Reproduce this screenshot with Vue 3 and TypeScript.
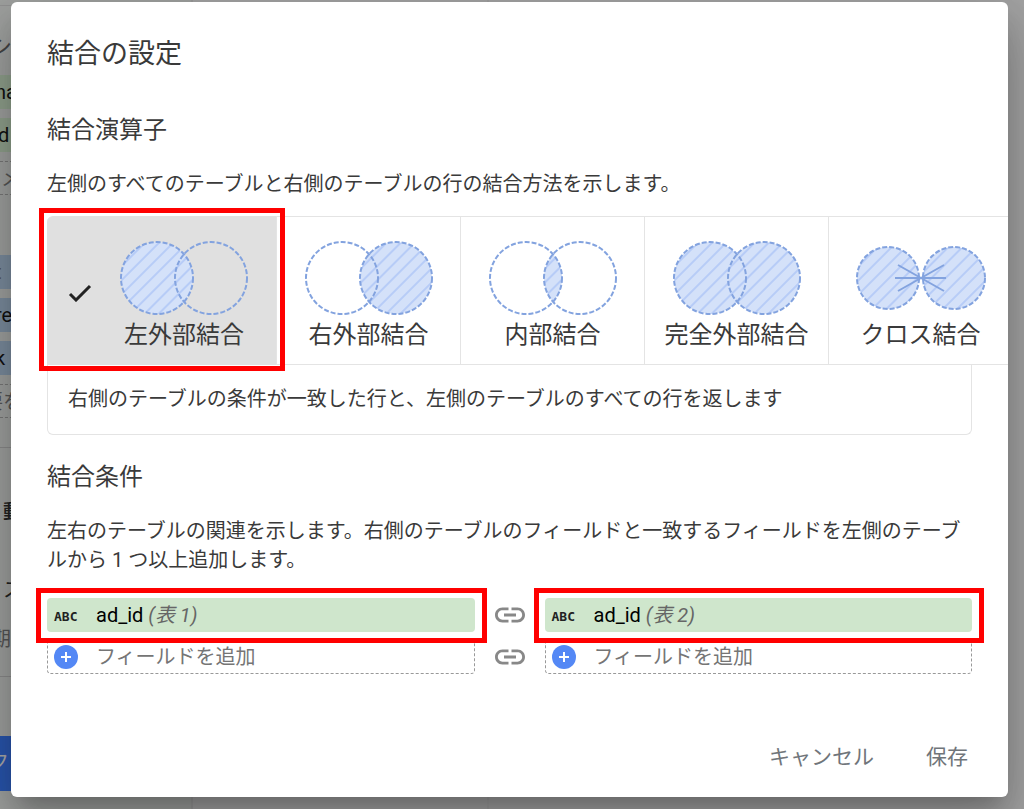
<script setup lang="ts">
import { ref } from 'vue'

type JoinKind = 'left' | 'right' | 'inner' | 'full' | 'cross'

interface JoinOption {
  kind: JoinKind
  label: string
}

const joins: JoinOption[] = [
  { kind: 'left', label: '左外部結合' },
  { kind: 'right', label: '右外部結合' },
  { kind: 'inner', label: '内部結合' },
  { kind: 'full', label: '完全外部結合' },
  { kind: 'cross', label: 'クロス結合' },
]

const selected = ref<JoinKind>('left')
const tables = ['(表 1)', '(表 2)']
</script>

<template>
  <div class="page">
    <div class="backdrop" aria-hidden="true">
      <div class="side">
        <div class="side-title">シ</div>
        <div class="pill green">na</div>
        <div class="pill green">d</div>
        <div class="pill dashed indented">メ</div>
        <div class="pill blue first">t</div>
        <div class="pill blue">re</div>
        <div class="pill blue">k</div>
        <div class="pill dashed pulled">要を</div>
        <div class="side-group">
          <div class="side-line strong">動</div>
          <div class="side-line">ス</div>
          <div class="side-line faint">期</div>
        </div>
        <div class="side-button">ク</div>
      </div>
      <div class="middle"></div>
    </div>

    <main class="dialog" role="dialog" aria-labelledby="dialog-title">
      <h1 id="dialog-title">結合の設定</h1>

      <h2>結合演算子</h2>
      <p>左側のすべてのテーブルと右側のテーブルの行の結合方法を示します。</p>

      <div class="joins" role="group" aria-label="結合演算子">
        <button
          v-for="join in joins"
          :key="join.kind"
          type="button"
          class="join"
          :class="{ selected: join.kind === selected }"
          :aria-pressed="join.kind === selected"
          @click="selected = join.kind"
        >
          <svg v-if="join.kind === selected" class="check" viewBox="0 0 24 18">
            <path d="M2 10l6 6L22 2" />
          </svg>
          <span class="join-body">
            <svg class="venn" viewBox="0 0 132 76">
              <defs>
                <pattern
                  :id="`hatch-${join.kind}`"
                  width="10"
                  height="10"
                  patternUnits="userSpaceOnUse"
                  patternTransform="rotate(45)"
                >
                  <rect width="10" height="10" class="tint" />
                  <rect width="2" height="10" class="stripe" />
                </pattern>
              </defs>
              <template v-if="join.kind === 'cross'">
                <circle class="ring" cx="33" cy="38" r="31" :fill="`url(#hatch-${join.kind})`" />
                <circle class="ring" cx="99" cy="38" r="31" :fill="`url(#hatch-${join.kind})`" />
                <path class="rays" d="M40 38h51M43 25l46 26M89 25L43 51" />
              </template>
              <template v-else>
                <path
                  v-if="join.kind === 'inner'"
                  d="M66 14A36 36 0 0 1 66 62A36 36 0 0 1 66 14Z"
                  :fill="`url(#hatch-${join.kind})`"
                />
                <circle
                  v-if="join.kind === 'left' || join.kind === 'full'"
                  cx="39"
                  cy="38"
                  r="36"
                  :fill="`url(#hatch-${join.kind})`"
                />
                <circle
                  v-if="join.kind === 'right' || join.kind === 'full'"
                  cx="93"
                  cy="38"
                  r="36"
                  :fill="`url(#hatch-${join.kind})`"
                />
                <circle class="ring" cx="39" cy="38" r="36" fill="none" />
                <circle class="ring" cx="93" cy="38" r="36" fill="none" />
              </template>
            </svg>
            <span>{{ join.label }}</span>
          </span>
          <span v-if="join.kind === 'left'" class="mark"></span>
        </button>
      </div>
      <div class="explain">右側のテーブルの条件が一致した行と、左側のテーブルのすべての行を返します</div>

      <h2 class="conditions">結合条件</h2>
      <p>左右のテーブルの関連を示します。右側のテーブルのフィールドと一致するフィールドを左側のテーブルから 1 つ以上追加します。</p>

      <div class="fields">
        <template v-for="(table, i) in tables" :key="table">
          <svg v-if="i > 0" class="link" viewBox="0 0 24 24">
            <path d="M3.900 12c0-1.710 1.390-3.100 3.100-3.100h4V7H7c-2.760 0-5 2.240-5 5s2.240 5 5 5h4v-1.900H7c-1.710 0-3.100-1.390-3.100-3.100zM8 13h8v-2H8v2zm9-6h-4v1.900h4c1.710 0 3.100 1.390 3.100 3.100s-1.390 3.100-3.100 3.100h-4V17h4c2.760 0 5-2.240 5-5s-2.240-5-5-5z" />
          </svg>
          <button type="button" class="field chip">
            <span class="type">ABC</span>
            <span>ad_id <em>{{ table }}</em></span>
            <span class="mark"></span>
          </button>
        </template>
        <template v-for="(table, i) in tables" :key="`add-${table}`">
          <svg v-if="i > 0" class="link" viewBox="0 0 24 24">
            <path d="M3.900 12c0-1.710 1.390-3.100 3.100-3.100h4V7H7c-2.760 0-5 2.240-5 5s2.240 5 5 5h4v-1.900H7c-1.710 0-3.100-1.390-3.100-3.100zM8 13h8v-2H8v2zm9-6h-4v1.900h4c1.710 0 3.100 1.390 3.100 3.100s-1.390 3.100-3.100 3.100h-4V17h4c2.760 0 5-2.240 5-5s-2.240-5-5-5z" />
          </svg>
          <button type="button" class="field add">
            <svg class="plus" viewBox="0 0 24 24">
              <circle cx="12" cy="12" r="12" />
              <path d="M12 7v10M7 12h10" />
            </svg>
            <span>フィールドを追加</span>
          </button>
        </template>
      </div>

      <div class="actions">
        <button type="button">キャンセル</button>
        <button type="button">保存</button>
      </div>
    </main>
  </div>
</template>

<style>
body {
  margin: 0;
}
</style>

<style scoped>
* {
  box-sizing: border-box;
}

.page {
  position: relative;
  min-height: 100vh;
  padding: 2px 16px 12px 11px;
  overflow: hidden;
  background: #a3a3a3;
  font-family: Roboto, "Noto Sans CJK JP", sans-serif;
  font-size: 20px;
  line-height: 29px;
  color: #3a3a3a;
}

button {
  font: inherit;
  color: inherit;
  margin: 0;
  padding: 0;
  border: 0;
  background: none;
  text-align: left;
  cursor: pointer;
}

/* Dimmed editor behind the dialog */
.backdrop {
  position: absolute;
  inset: 0;
  display: flex;
}

.side {
  width: 193px;
  padding-top: 5px;
  background: #9fa19f;
  border-right: 2px solid #9a9a9a;
  overflow: hidden;
  color: #222;
}

.middle {
  width: 296px;
  border-right: 2px solid #9e9e9e;
}

.side-title {
  height: 70px;
  padding-top: 26px;
  border-top: 1px solid #929292;
  font-size: 22px;
  text-indent: -10px;
  color: #444;
}

.pill {
  height: 34px;
  margin-bottom: 9px;
  line-height: 34px;
  text-indent: -5px;
  color: #111;
}

.green {
  background: #8fa08c;
}

.green + .green {
  text-indent: -2px;
}

.blue {
  background: #7b8c9e;
}

.blue.first {
  margin-top: 60px;
  color: #555;
}

.dashed {
  border: 1px dashed #777;
  border-width: 1px 0;
  color: #555;
}

.indented {
  text-indent: 1px;
}

.pulled {
  text-indent: -17px;
}

.side-group {
  height: 230px;
  margin-top: 29px;
  padding-top: 50px;
  border: 1px solid #8a8a8a;
  border-width: 1px 0;
}

.side-line {
  margin-bottom: 20px;
  text-indent: 3px;
}

.side-line.strong {
  margin-bottom: 49px;
  font-weight: 500;
}

.side-line.faint {
  color: #555;
  text-indent: -9px;
}

.side-button {
  height: 55px;
  margin-top: 59px;
  line-height: 52px;
  background: #2955ad;
  color: #aaa;
  text-indent: -11px;
}

/* Dialog */
.dialog {
  position: relative;
  padding: 31px 36px 16px;
  border-radius: 6px;
  background: #fff;
  box-shadow:
    0 15px 20px -9px rgba(0, 0, 0, 0.2),
    0 32px 50px 4px rgba(0, 0, 0, 0.14),
    0 12px 61px 10px rgba(0, 0, 0, 0.12);
}

h1,
h2,
p {
  margin: 0;
  font-weight: 400;
}

h1 {
  font-size: 27px;
  line-height: 42px;
}

h2 {
  margin-top: 37px;
  font-size: 24px;
  line-height: 36px;
}

h2.conditions {
  margin-top: 24px;
}

p {
  margin-top: 22px;
}

.joins {
  display: flex;
  margin: 17px -36px 0 0;
  clip-path: inset(-20px 0 -20px -20px);
}

.join {
  position: relative;
  flex: none;
  display: flex;
  justify-content: flex-end;
  height: 149px;
  border: solid #e4e4e4;
  border-width: 1px 0;
}

.join + .join {
  border-left-width: 1px;
}

.join:first-child {
  border-top-left-radius: 6px;
}

.join.selected {
  background: #e0e0e0;
  border-color: #e0e0e0;
}

.join-body {
  display: flex;
  flex-direction: column;
  align-items: center;
  width: 184px;
  padding-top: 23px;
  font-size: 24px;
  line-height: 36px;
}

.join + .join .join-body {
  width: 183px;
}

.check {
  align-self: center;
  width: 24px;
  height: 18px;
  margin-left: 21px;
  margin-top: 4px;
  fill: none;
  stroke: #222;
  stroke-width: 3;
}

.venn {
  width: 132px;
  height: 76px;
  margin-bottom: 1px;
}

.ring {
  stroke: #83a3df;
  stroke-width: 2;
  stroke-dasharray: 5 2;
}

.tint {
  fill: #d4e1f9;
}

.stripe {
  fill: #b7ccf7;
}

.rays {
  fill: none;
  stroke: #83a3df;
  stroke-width: 2;
}

/* Red emphasis frames */
.mark {
  position: absolute;
  inset: -9px -9px -7px -8px;
  border: 5px solid #f00;
  z-index: 1;
  pointer-events: none;
}

.explain {
  padding: 20px;
  border: 1px solid #e4e4e4;
  border-top: 0;
  border-radius: 0 0 6px 6px;
}

.fields {
  display: grid;
  grid-template-columns: 1fr 36px 1fr;
  gap: 8px 17px;
  align-items: center;
  margin-top: 23px;
}

.link {
  width: 36px;
  height: 36px;
  margin: -1px 0;
  fill: #888;
}

.field {
  position: relative;
  display: flex;
  align-items: center;
  height: 34px;
}

.chip {
  gap: 19px;
  padding-left: 7px;
  border-radius: 4px;
  background: #cfe6cc;
  color: #000;
}

.chip em {
  color: #666;
}

.type {
  width: 23px;
  padding-top: 3px;
  font: bold 13px "DejaVu Sans Mono", monospace;
  color: #222;
}

.chip .mark {
  inset: -10px -12px -11px -11px;
}

.add {
  gap: 18px;
  padding-left: 6px;
  border: 1px dashed #999;
  border-radius: 4px;
  color: #757575;
}

.plus {
  width: 24px;
  height: 24px;
  fill: #5488f5;
}

.plus path {
  stroke: #fff;
  stroke-width: 2;
}

.actions {
  display: flex;
  justify-content: flex-end;
  gap: 44px;
  margin-top: 59px;
}

.actions button {
  height: 48px;
  padding: 0 4px;
  font-size: 21px;
  color: #70757a;
}
</style>
